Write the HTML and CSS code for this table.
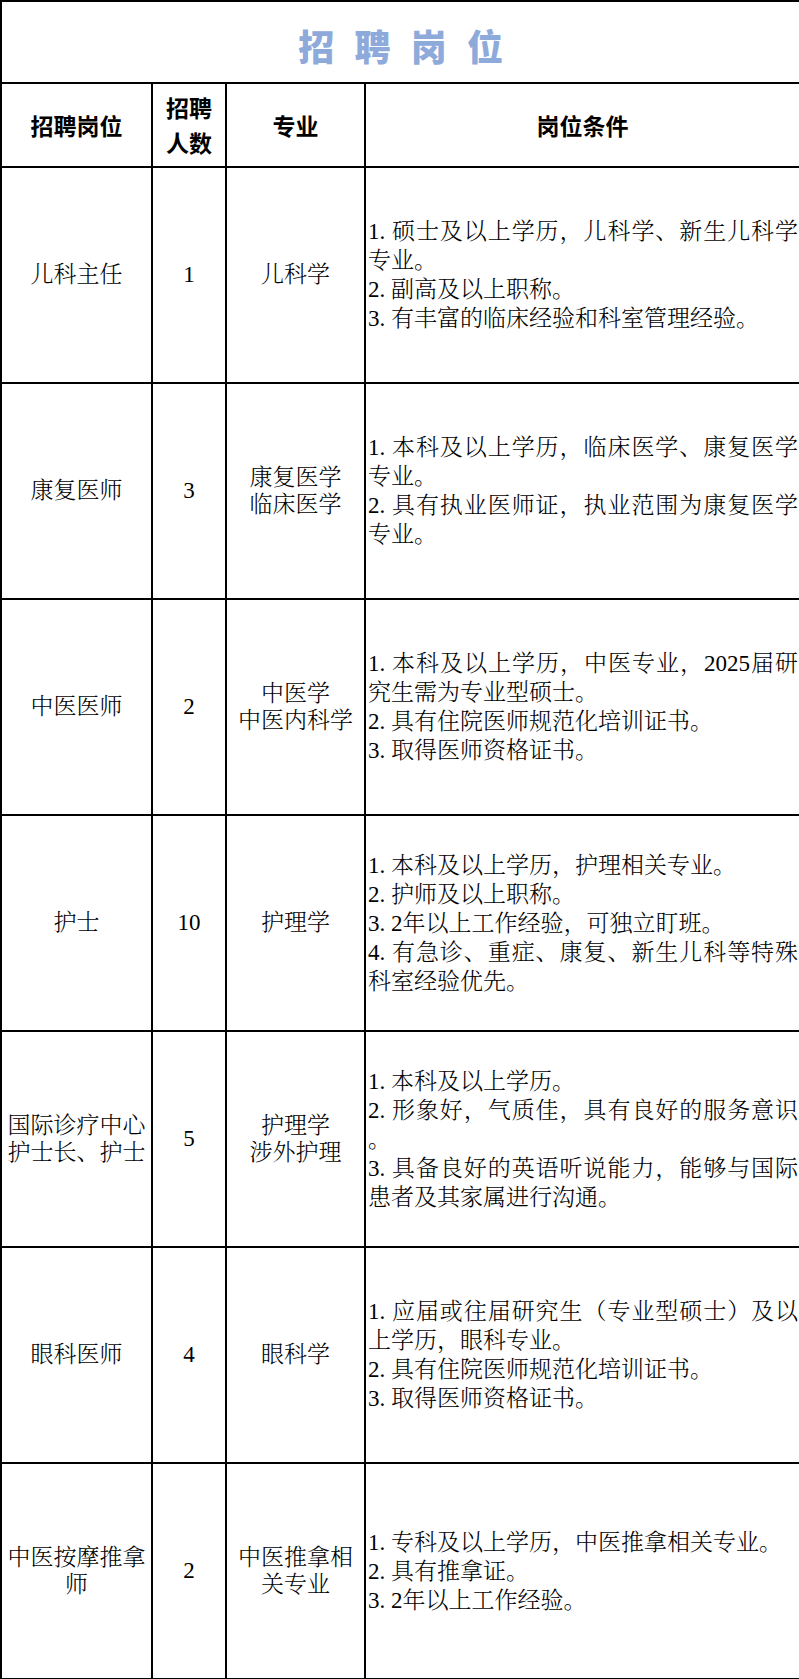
FILE: index.html
```html
<!DOCTYPE html>
<html lang="zh-CN">
<head>
<meta charset="utf-8">
<title>招聘岗位</title>
<link rel="stylesheet" href="styles.css">
</head>
<body>
<table class="jobs">
  <colgroup>
    <col class="c-pos">
    <col class="c-num">
    <col class="c-major">
    <col class="c-req">
  </colgroup>
  <thead>
    <tr class="title-row"><th colspan="4" class="title">招 聘 岗 位</th></tr>
    <tr class="head-row"><th>招聘岗位</th><th>招聘人数</th><th>专业</th><th>岗位条件</th></tr>
  </thead>
  <tbody>
    <tr>
      <td>儿科主任</td><td class="num">1</td><td>儿科学</td>
      <td class="req"><p>1. 硕士及以上学历，儿科学、新生儿科学专业。</p><p>2. 副高及以上职称。</p><p>3. 有丰富的临床经验和科室管理经验。</p></td>
    </tr>
    <tr>
      <td>康复医师</td><td class="num">3</td><td>康复医学<br>临床医学</td>
      <td class="req"><p>1. 本科及以上学历，临床医学、康复医学专业。</p><p>2. 具有执业医师证，执业范围为康复医学专业。</p></td>
    </tr>
    <tr>
      <td>中医医师</td><td class="num">2</td><td>中医学<br>中医内科学</td>
      <td class="req"><p>1. 本科及以上学历，中医专业，2025届研究生需为专业型硕士。</p><p>2. 具有住院医师规范化培训证书。</p><p>3. 取得医师资格证书。</p></td>
    </tr>
    <tr>
      <td>护士</td><td class="num">10</td><td>护理学</td>
      <td class="req"><p>1. 本科及以上学历，护理相关专业。</p><p>2. 护师及以上职称。</p><p>3. 2年以上工作经验，可独立盯班。</p><p>4. 有急诊、重症、康复、新生儿科等特殊科室经验优先。</p></td>
    </tr>
    <tr>
      <td>国际诊疗中心护士长、护士</td><td class="num">5</td><td>护理学<br>涉外护理</td>
      <td class="req"><p>1. 本科及以上学历。</p><p>2. 形象好，气质佳，具有良好的服务意识。</p><p>3. 具备良好的英语听说能力，能够与国际患者及其家属进行沟通。</p></td>
    </tr>
    <tr>
      <td>眼科医师</td><td class="num">4</td><td>眼科学</td>
      <td class="req"><p>1. 应届或往届研究生（专业型硕士）及以上学历，眼科专业。</p><p>2. 具有住院医师规范化培训证书。</p><p>3. 取得医师资格证书。</p></td>
    </tr>
    <tr>
      <td>中医按摩推拿师</td><td class="num">2</td><td>中医推拿相关专业</td>
      <td class="req"><p>1. 专科及以上学历，中医推拿相关专业。</p><p>2. 具有推拿证。</p><p>3. 2年以上工作经验。</p></td>
    </tr>
  </tbody>
</table>
</body>
</html>
```

FILE: styles.css
```css
html, body {
  margin: 0;
  padding: 0;
  background: #fff;
}

.jobs {
  width: 799px;
  border-collapse: collapse;
  table-layout: fixed;
  font-family: "Liberation Serif", "Noto Serif CJK SC", "Noto Sans CJK SC", serif;
  font-size: 23px;
  color: #000;
  text-spacing-trim: space-all;
}

.c-pos { width: 151px; }
.c-num { width: 74px; }
.c-major { width: 139px; }
.c-req { width: 435px; }

.jobs th,
.jobs td {
  border: 2px solid #000;
  padding: 0 4px;
  text-align: center;
  vertical-align: middle;
  line-height: 27.5px;
  font-weight: 300;
}

.title-row { height: 82px; }
.head-row { height: 84px; }
.jobs tbody tr { height: 216px; }

.jobs .title {
  font-family: "Noto Sans CJK SC", sans-serif;
  font-weight: 900;
  font-size: 36px;
  line-height: 40px;
  color: #8eaadb;
  word-spacing: 12px;
  padding-top: 6px;
}

.head-row th {
  font-family: "Noto Sans CJK SC", sans-serif;
  font-weight: 700;
  font-size: 23px;
  line-height: 35px;
}

.jobs .num {
  font-family: "Liberation Serif", serif;
}

.jobs .req {
  text-align: justify;
  padding: 0 1px 0 2px;
  line-break: anywhere;
  line-height: 29px;
}

.req p {
  margin: 0;
}
```
